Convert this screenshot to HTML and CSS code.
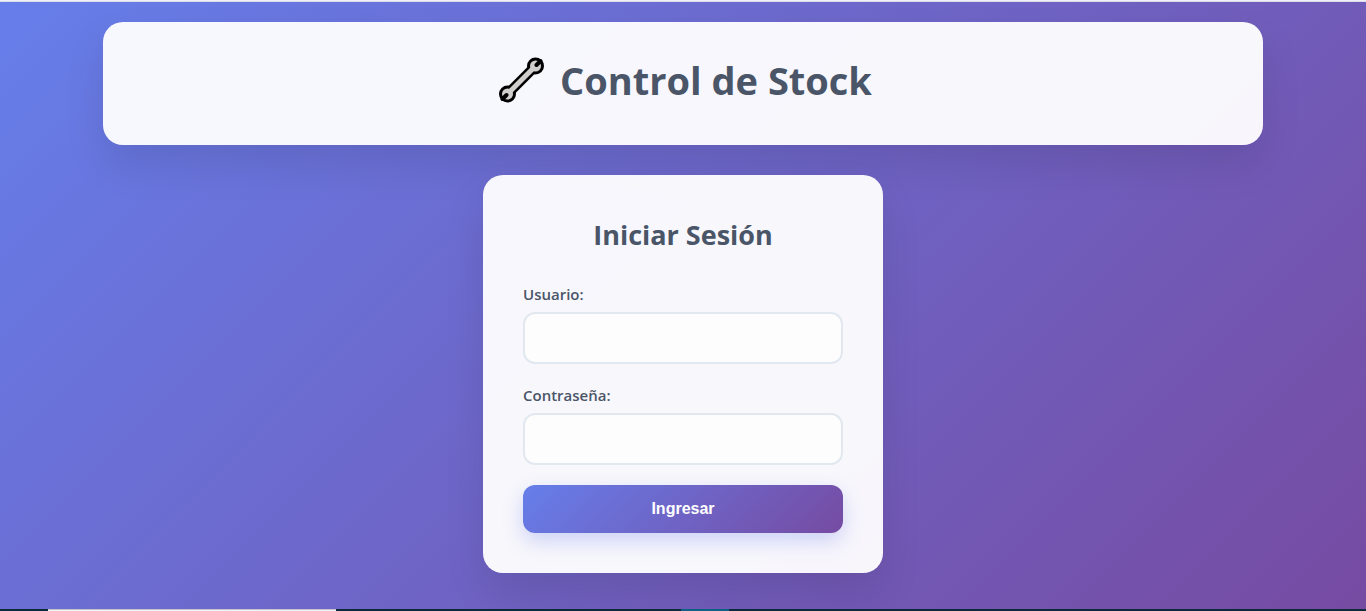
FILE: index.html
```html
<!DOCTYPE html>
<html lang="es">
<head>
<meta charset="utf-8">
<meta name="viewport" content="width=device-width, initial-scale=1">
<title>Control de Stock</title>
<link rel="stylesheet" href="styles.css">
</head>
<body>
<div class="top-edge"></div>
<main class="page">
  <header class="card header">
    <h1 class="title">
      <svg class="wrench" viewBox="8 7 48 48" aria-hidden="true">
        <g class="wrench-outline">
          <circle cx="45.500" cy="17" r="8.500"/>
          <circle cx="17.500" cy="45" r="8.500"/>
          <path d="M19 43.500L44 18.500"/>
        </g>
        <g class="wrench-metal">
          <circle cx="45.500" cy="17" r="5.500"/>
          <circle cx="17.500" cy="45" r="5.500"/>
          <path d="M19 43.500L44 18.500"/>
        </g>
        <path class="wrench-jaw" d="M50.500 12L46.500 16M12.500 50L16.500 46"/>
      </svg>
      <span>Control de Stock</span>
    </h1>
  </header>
  <section class="card login">
    <h2 class="subtitle">Iniciar Sesión</h2>
    <form class="form">
      <div class="field">
        <label class="label" for="user">Usuario:</label>
        <input class="input" type="text" id="user" autocomplete="username">
      </div>
      <div class="field">
        <label class="label" for="password">Contraseña:</label>
        <input class="input" type="password" id="password" autocomplete="current-password">
      </div>
      <button class="submit" type="submit">Ingresar</button>
    </form>
  </section>
</main>
<div class="bottom-edge"><span class="edge-light"></span><span class="edge-teal"></span></div>
</body>
</html>
```
FILE: styles.css
```css
* {
  box-sizing: border-box;
  margin: 0;
}

body {
  min-height: 100vh;
  display: flex;
  flex-direction: column;
  font-family: "Open Sans", "Noto Sans", sans-serif;
  color: #4a5568;
}

.top-edge {
  height: 2px;
  background: #f0f1f8;
  border-bottom: 1px solid #dcdde8;
}

.page {
  flex: 1;
  display: flex;
  flex-direction: column;
  align-items: center;
  gap: 30px;
  padding: 20px 20px 36px;
  background: linear-gradient(135deg, #667eea 0%, #764ba2 100%);
}

.card {
  width: 100%;
  background: rgba(255, 255, 255, 0.95);
  border-radius: 20px;
  box-shadow: 0 20px 40px rgba(0, 0, 0, 0.1);
}

.header {
  max-width: 1160px;
  padding: 30px 28px 37px 32px;
}

.title {
  display: flex;
  align-items: center;
  justify-content: center;
  gap: 14px;
  font-size: 38px;
  line-height: 56px;
  font-weight: 700;
}

.wrench {
  width: 48px;
  height: 48px;
}

.wrench-outline {
  fill: #000;
}

.wrench-outline path {
  stroke: #000;
  stroke-width: 10;
}

.wrench-metal {
  fill: #d0cfce;
}

.wrench-metal path {
  stroke: #d0cfce;
  stroke-width: 5;
}

.wrench-jaw {
  fill: none;
  stroke: #000;
  stroke-width: 4;
  stroke-linecap: round;
}

.login {
  max-width: 400px;
  padding: 40px;
}

.subtitle {
  margin-bottom: 28px;
  font-size: 27px;
  line-height: 40px;
  font-weight: 700;
  text-align: center;
}

.form,
.field {
  display: flex;
  flex-direction: column;
}

.form {
  gap: 20px;
}

.field {
  gap: 6px;
}

.label {
  font-size: 15px;
  line-height: 23px;
  font-weight: 600;
}

.input {
  width: 100%;
  height: 52px;
  padding: 15px;
  font: inherit;
  color: inherit;
  background: #fdfdfe;
  border: 2px solid #e2e8f0;
  border-radius: 12px;
}

.submit {
  height: 48px;
  border: 0;
  border-radius: 12px;
  background: linear-gradient(135deg, #667eea 0%, #764ba2 100%);
  box-shadow: 0 8px 20px rgba(102, 126, 234, 0.3);
  color: #fff;
  font-family: "Liberation Sans", Arial, sans-serif;
  font-size: 16px;
  font-weight: 700;
  cursor: pointer;
}

.bottom-edge {
  display: grid;
  grid-template-columns: 48fr 288fr 345fr 48fr 637fr;
  height: 2px;
  background: #0d2a3a;
}

.edge-light {
  grid-column: 2;
  background: #f3f3f3;
  border-top: 1px solid #c4c4cc;
}

.edge-teal {
  grid-column: 4;
  background: #0f6184;
}
```
